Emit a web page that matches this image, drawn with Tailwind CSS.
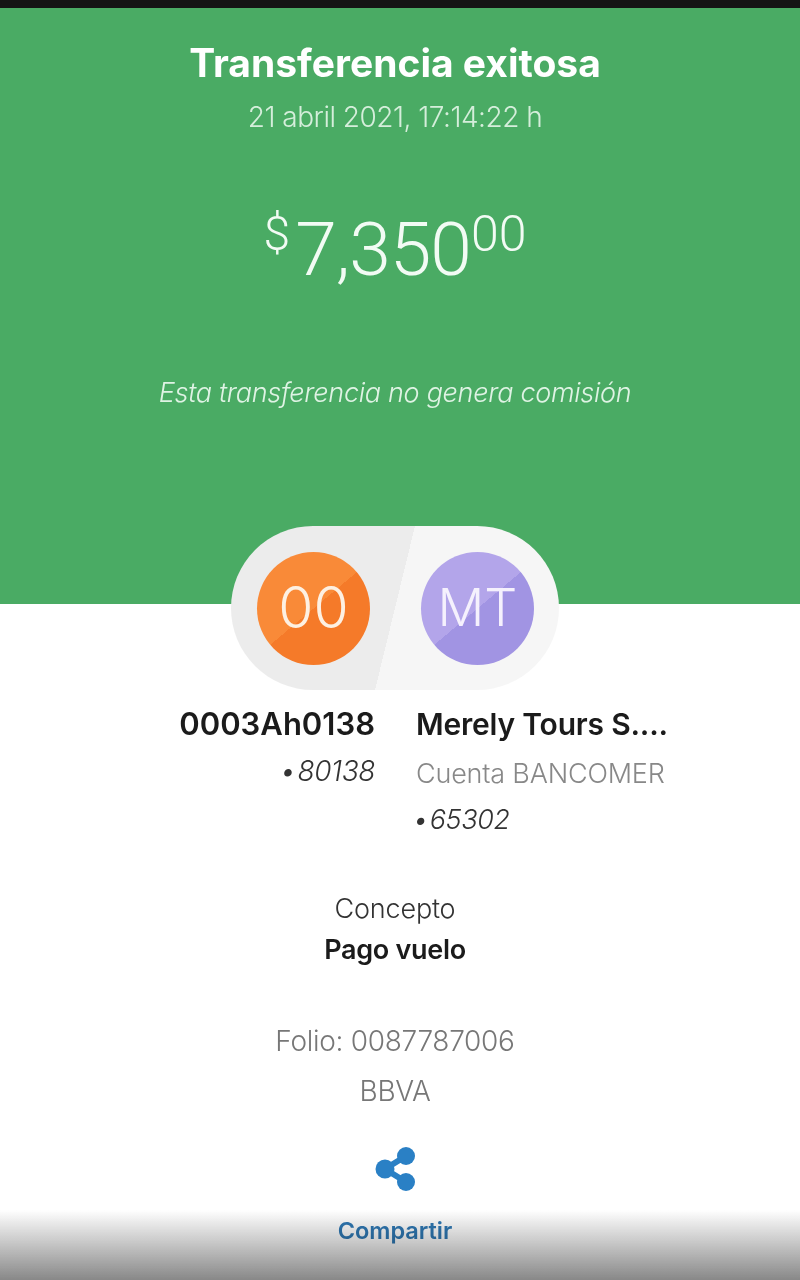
<!DOCTYPE html>
<html lang="es">
<head>
  <meta charset="UTF-8" />
  <title>Transferencia exitosa</title>
  <script src="https://cdn.jsdelivr.net/npm/@tailwindcss/browser@4"></script>
</head>
<body class="bg-white">
  <div class="relative w-[800px] h-[1280px] overflow-hidden bg-white font-['Inter','Open_Sans',sans-serif] blur-[0.5px]">

    <!-- top bar -->
    <div class="h-2 bg-[#141414]"></div>

    <!-- green header -->
    <div class="h-[596px] bg-[#4aab64] flex flex-col items-center text-white pr-[10px]">
      <h1 class="mt-[30px] text-[39px] leading-[50px] font-bold">Transferencia exitosa</h1>
      <p class="mt-[11px] text-[28px] leading-[36px] font-light text-[#d5eedb] tracking-[-0.5px]">21 abril 2021, 17:14:22 h</p>
      <div class="mt-[72px] flex items-start font-light text-[#f2fbf4] font-['Roboto',sans-serif]">
        <span class="text-[48px] leading-[50px] mt-[2px] mr-[5px]">$</span>
        <span class="text-[75px] leading-[84px] tracking-[-1px]">7,350</span>
        <span class="text-[50px] leading-[50px] mt-[2px]">00</span>
      </div>
      <p class="mt-[84px] text-[27px] leading-[36px] font-light italic text-[#dff3e4] tracking-[-0.3px]">Esta transferencia no genera comisión</p>
    </div>

    <!-- avatars pill -->
    <div class="relative z-10 -mt-[78px] ml-[231px] w-[328px] h-[164px] rounded-full flex items-center gap-[51px] pl-[26px] bg-[linear-gradient(103.7deg,#ececec_50%,#f6f6f6_50%)]">
      <div class="w-[113px] h-[113px] rounded-full flex items-center justify-center text-[57px] font-light text-[#fdf0e2] bg-[linear-gradient(140deg,#f98a38_50%,#f57a29_50%)]">00</div>
      <div class="w-[113px] h-[113px] rounded-full flex items-center justify-center text-[52px] font-light text-[#f5f1fd] bg-[linear-gradient(140deg,#b3a5ea_50%,#a194e3_50%)]">MT</div>
    </div>

    <!-- accounts -->
    <div class="grid grid-cols-[375px_1fr] gap-x-[41px] mt-[14px]">
      <div class="flex flex-col items-end">
        <p class="text-[31px] leading-[40px] font-semibold text-[#1b1b1b]">0003Ah0138</p>
        <p class="mt-[7px] text-[28px] leading-[40px] italic font-light text-[#333] tracking-[-0.4px]"><span class="mr-[2px]">•</span>80138</p>
      </div>
      <div>
        <p class="text-[30px] leading-[40px] font-semibold text-[#1b1b1b] tracking-[-0.2px]">Merely Tours S....</p>
        <p class="mt-[10px] text-[27px] leading-[40px] font-light text-[#888] tracking-[-0.2px]">Cuenta BANCOMER</p>
        <p class="mt-[6px] -ml-[3px] text-[27px] leading-[40px] italic font-light text-[#333] tracking-[-0.4px]"><span class="mr-[2px]">•</span>65302</p>
      </div>
    </div>

    <!-- concept -->
    <div class="mt-[50px] flex flex-col items-center pr-[10px]">
      <p class="text-[27px] leading-[38px] text-[#333] font-light tracking-[-0.2px]">Concepto</p>
      <p class="mt-[3px] text-[27px] leading-[38px] font-semibold text-[#1b1b1b] tracking-[-0.3px]">Pago vuelo</p>
      <p class="mt-[53px] text-[28px] leading-[38px] font-light text-[#777] tracking-[-0.3px]">Folio: 0087787006</p>
      <p class="mt-[12px] text-[28px] leading-[38px] font-light text-[#777] tracking-[-0.3px]">BBVA</p>
      <svg class="mt-[37px] w-[42px] h-[46px]" viewBox="0 0 42 46" fill="none">
        <path d="M32 9 L11 22 L32 35" stroke="#2a80c5" stroke-width="6" />
        <circle cx="32" cy="9" r="9" fill="#2a80c5" />
        <circle cx="11" cy="22" r="9.5" fill="#2a80c5" />
        <circle cx="32" cy="35" r="9" fill="#2a80c5" />
      </svg>
      <p class="mt-[21px] text-[23.5px] leading-[34px] font-semibold text-[#2f79b5]">Compartir</p>
    </div>

    <!-- bottom shade over the content -->
    <div class="absolute inset-x-0 bottom-0 h-[70px] bg-gradient-to-b from-white/0 to-[#888]/100 mix-blend-multiply"></div>
  </div>
</body>
</html>
